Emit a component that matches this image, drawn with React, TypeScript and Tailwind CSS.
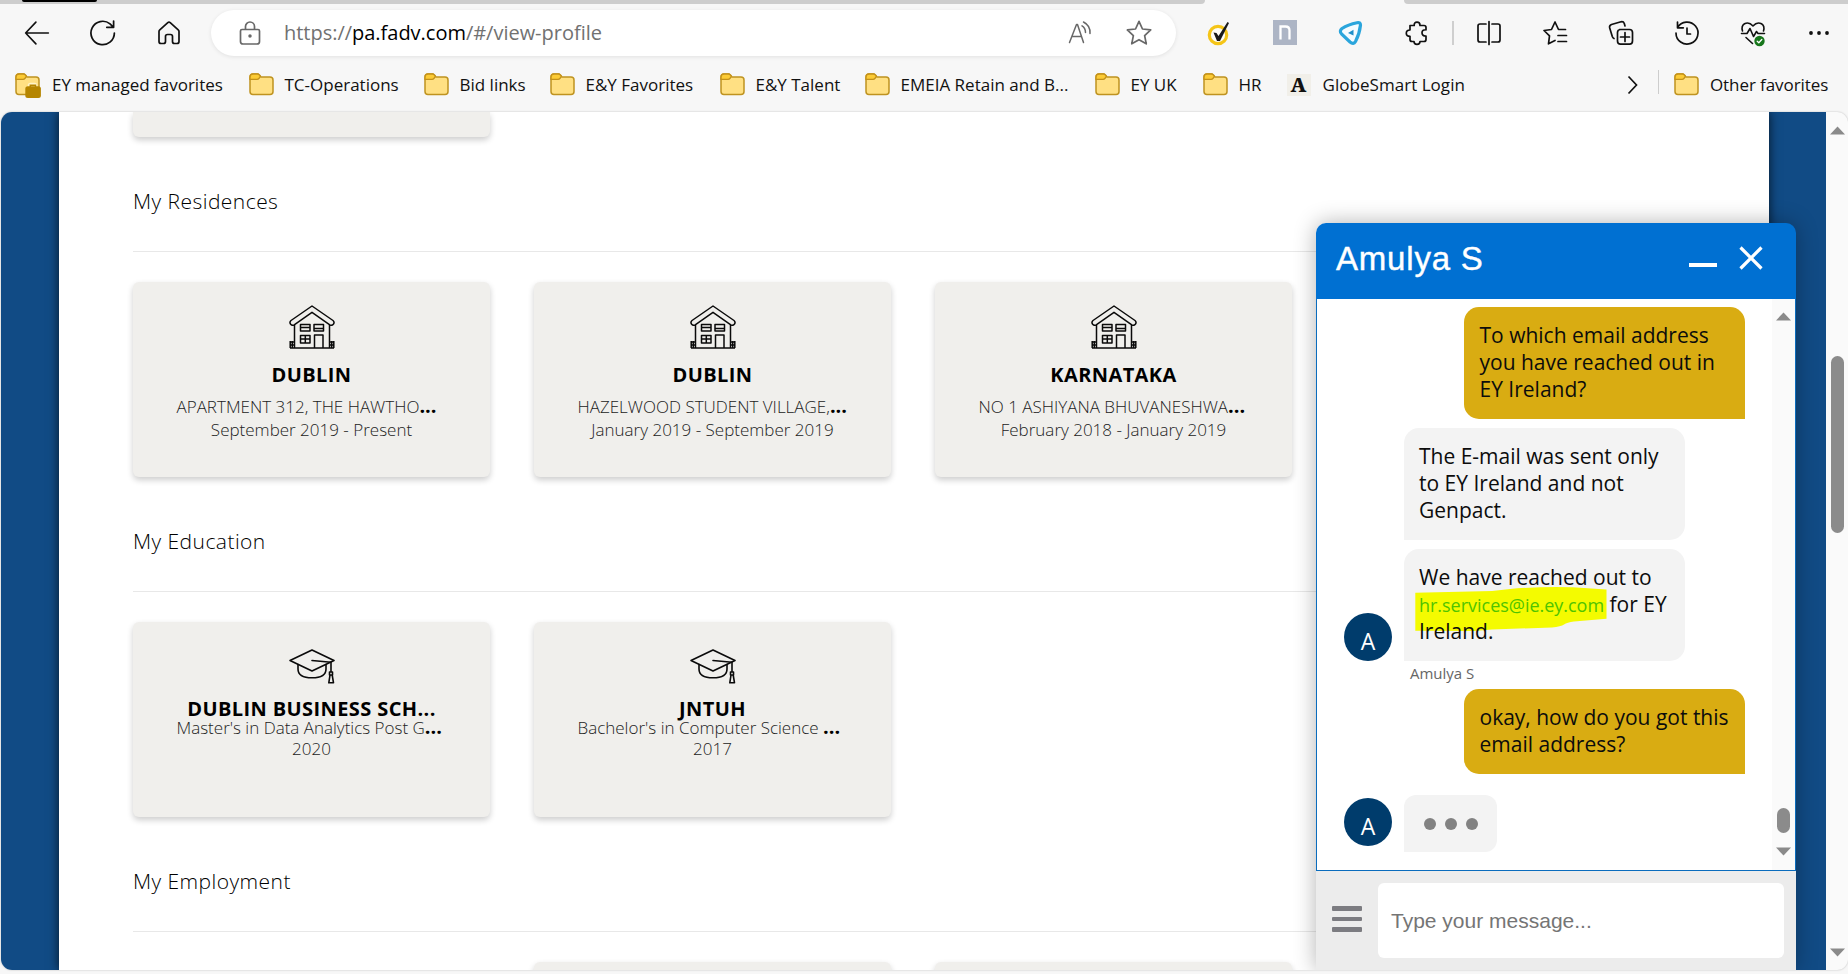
import type { ReactNode } from "react";

const OPEN = "font-['Open_Sans',sans-serif]";

function Cell({ children }: { children: ReactNode }) {
  return <div className="flex w-[66px] shrink-0 items-center justify-center">{children}</div>;
}

function Line({ d, w = 24, children, stroke = "#111", sw = 1.7 }: { d: string; w?: number; children?: ReactNode; stroke?: string; sw?: number }) {
  return (
    <svg width={w} height={w} viewBox="0 0 24 24" fill="none" stroke={stroke} strokeWidth={sw} strokeLinecap="round" strokeLinejoin="round" className="overflow-visible">
      <path d={d} />
      {children}
    </svg>
  );
}

function Folder({ managed = false }: { managed?: boolean }) {
  return (
    <svg width="26" height="24" viewBox="0 0 26 24" className="shrink-0 overflow-visible">
      <path d="M1 4.5Q1 1 4 1H9L12 4H21Q24 4 24 7V18.500Q24 21.500 21 21.500H4Q1 21.500 1 18.500Z" fill="#ffe083" stroke="#bf9320" strokeWidth="1.5" />
      <path d="M1 4Q1 1 4 1H8.500Q9.500 1 10.500 2L11.500 3.200L10 5.400Q9.300 6.400 8 6.400H1Z" fill="#fccb35" stroke="#c4921a" strokeWidth="1.400" strokeLinejoin="round" />
      {managed && (
        <g>
          <path d="M14.500 14V12.500Q14.500 11.500 15.500 11.500H19.500Q20.500 11.500 20.500 12.500V14" fill="none" stroke="#fff3c8" strokeWidth="3.500" />
          <rect x="10.300" y="13.200" width="15.600" height="11.800" rx="2.500" fill="#b58500" />
          <path d="M15.300 14V12.300H20.500V14" fill="none" stroke="#b58500" strokeWidth="1.500" />
        </g>
      )}
    </svg>
  );
}

const bookmarks = [
  { label: "TC-Operations", cell: "w-[175px]" },
  { label: "Bid links", cell: "w-[126px]" },
  { label: "E&Y Favorites", cell: "w-[170px]" },
  { label: "E&Y Talent", cell: "w-[145px]" },
  { label: "EMEIA Retain and B...", cell: "w-[230px]" },
  { label: "EY UK", cell: "w-[108px]" },
  { label: "HR", cell: "w-[84px]" },
];

function Toolbar() {
  return (
    <div className="flex h-[57px] items-center pl-[4px]">
      <Cell><Line w={26} sw={1.5} d="M22.500 12H1.500M11 2L1.500 12L11 22" /></Cell>
      <Cell>
        <Line w={26} sw={1.600} d="M22.500 12A10.800 10.800 0 1 1 18.500 3.600L21.500 6.500M21.800 1V6.800H15.500" />
      </Cell>
      <Cell><Line sw={1.700} d="M2 10.500Q2 9.500 2.800 8.800L10.800 1.700Q12 0.700 13.200 1.700L21.200 8.800Q22 9.500 22 10.500V20.500Q22 22.500 20 22.500H17.500Q15.500 22.500 15.500 20.500V15.500Q15.500 13.500 13.500 13.500H10.500Q8.500 13.500 8.500 15.500V20.500Q8.500 22.500 6.500 22.500H4Q2 22.500 2 20.500Z" /></Cell>

      <div className="ml-[9px] flex h-[46px] w-[965px] shrink-0 items-center rounded-full bg-white pr-[24px] pl-[27px] shadow-[0_1px_4px_rgba(0,0,0,0.09)]">
        <Line stroke="#686868" d="M4 8.500H20Q21.500 8.500 21.500 10V20.500Q21.500 23 19 23H5Q2.500 23 2.500 20.500V10Q2.500 8.500 4 8.500ZM7.500 8V5.500A4.500 4.500 0 0 1 16.500 5.500V8">
          <circle cx="12" cy="15" r="0.900" fill="#686868" />
        </Line>
        <span className="ml-[22px] flex-1 text-[20px] leading-7 tracking-[-0.02px] text-[#717171]">
          https://<span className="text-black">pa.fadv.com</span>/#/view-profile
        </span>
        <Line stroke="#686868" sw={1.500} d="M1.500 21.500L8.500 3.500H9.500L15.500 21.500M4 15.500H13.500M14 4.800Q17.500 7 17.500 11.500M15.500 1Q22.500 4.500 22 12.500" />
        <div className="ml-[34px]">
          <Line w={26} stroke="#686868" sw={1.600} d="M12 1.300L15.200 8.300L22.800 9.200L17.200 14.400L18.700 22L12 18.200L5.300 22L6.800 14.400L1.200 9.200L8.800 8.300Z" />
        </div>
      </div>

      <div className="ml-[10px] flex shrink-0">
        <Cell>
          <svg width="24" height="24" viewBox="0 0 24 24" className="overflow-visible">
            <circle cx="11" cy="14" r="8.700" fill="#fdfdf7" stroke="#f5c518" strokeWidth="3.200" />
            <path d="M6.500 11.500L9.500 12L11.500 15L20.500 1L22 2L13 20H10Z" fill="#1a1a1a" />
          </svg>
        </Cell>
        <Cell>
          <svg width="24" height="25" viewBox="0 0 24 25">
            <rect width="24" height="25" fill="#adb5c5" />
            <path d="M7.500 19.500V6.500H12.500Q16.500 6.500 16.500 10.500V19.500" fill="none" stroke="#fff" strokeWidth="2.300" />
          </svg>
        </Cell>
        <Cell>
          <svg width="24" height="24" viewBox="0 0 24 24" className="overflow-visible">
            <path d="M3 7.500Q0 10 2.500 12.800L11 21Q14.500 24 16.500 20.500Q20.500 13 21.500 4Q21.500 1 18 1.700Q9 3.500 3 7.500Z" fill="#f4fbff" stroke="#2aa5dc" strokeWidth="3.200" />
            <path d="M9 12L14.500 8.700V14.500Z" fill="#1f8fc9" />
          </svg>
        </Cell>
        <Cell>
          <Line d="M5 4.500H9.200Q9 1.200 12 1.200T15 4.500H19Q21 4.500 21 6.500V8.800Q17 8.500 17 11.800T21 15V18.500Q21 20.500 19 20.500H15Q15 23.300 12 23.300T9 20.500H7Q5 20.500 5 18.500V15.300Q1.300 15.300 1.300 12.200T5 9Z" />
        </Cell>
        <div className="flex w-[6px] items-center justify-center"><div className="h-[24px] w-[2px] bg-[#cfcfcf]" /></div>
        <Cell><Line d="M9 3H3Q1 3 1 5V19Q1 21 3 21H9M15 3H21Q23 3 23 5V19Q23 21 21 21H15M12 0.500V23.500" /></Cell>
        <Cell><Line d="M22.500 8.500H15.500L12 1L8.500 8.500L1 9.500L6.500 14.800L5.500 22.800L12 19.500M15 14.500H23.500M15 20.500H23.500" /></Cell>
        <Cell>
          <Line d="M10.500 8.500H20.500Q23.500 8.500 23.500 11.500V20Q23.500 23.200 20.500 23.200H11.500Q8.500 23.200 8.500 20V11.500Q8.500 8.500 11.500 8.500M16 11.500V20.500M11.500 16H20.500M5 17.500Q3.800 17 3.300 15.500L0.700 7Q0 4.500 2.500 3.500L12 0.800Q14.500 0.300 15.300 2.500L16 5" />
        </Cell>
        <Cell><Line d="M2.500 6.500A11 11 0 1 1 1 12M2.500 1V6.800H8.300M12 7V13H15.500" /></Cell>
        <Cell>
          <Line sw={1.600} d="M1.500 10Q0 5 3.500 2.800Q8 0.500 12 5Q16 0.500 20.500 2.800Q24 5 22.500 10M0.500 12.500H6L9 7.500L12.500 15.500L15.500 10.500L17 12.500H23.500M5 16.500L11.500 22.500">
            <circle cx="18.500" cy="20" r="5.200" fill="#17761b" stroke="none" />
            <path d="M16.200 20.200L17.800 21.700L20.800 18.500" stroke="#fff" strokeWidth="1.300" />
          </Line>
        </Cell>
        <Cell>
          <svg width="24" height="24" viewBox="0 0 24 24" fill="#111"><circle cx="4" cy="12" r="1.900" /><circle cx="12" cy="12" r="1.900" /><circle cx="20" cy="12" r="1.900" /></svg>
        </Cell>
      </div>
    </div>
  );
}

function BookmarkBar() {
  return (
    <div className="flex h-[51px] items-center pb-[3px] pl-[15px] text-[17px] whitespace-nowrap text-[#111]">
      <div className="flex w-[233.500px] items-center gap-[11px]"><Folder managed /><span>EY managed favorites</span></div>
      {bookmarks.map((b) => (
        <div key={b.label} className={`flex shrink-0 items-center gap-[10px] ${b.cell}`}><Folder /><span>{b.label}</span></div>
      ))}
      <div className="flex items-center gap-[12px]">
        <span className="flex h-[22px] w-[24px] items-center justify-center bg-[#f1efe9] font-['Noto_Serif','DejaVu_Serif',serif] text-[20px] leading-none font-black">A</span>
        <span className="tracking-[0.04px]">GlobeSmart Login</span>
      </div>
      <svg width="12" height="20" viewBox="0 0 12 20" className="ml-[162px]" fill="none" stroke="#111" strokeWidth="1.700"><path d="M1.500 1.500L9.500 10L1.500 18.500" /></svg>
      <div className="mt-[9px] ml-[19px] h-[24px] w-px self-start bg-[#cdcdcd]" />
      <div className="ml-[15px] flex items-center gap-[10px]"><Folder /><span className="tracking-[-0.08px]">Other favorites</span></div>
    </div>
  );
}

function House() {
  return (
    <svg width="46" height="44" viewBox="0 0 46 44" fill="none" stroke="#0a0a0a" strokeWidth="1.500" strokeLinejoin="round">
      <path d="M23 1L44 15.500Q45.800 17 44.500 19Q43 21 40.800 19.800L23 7.300L5.200 19.800Q3 21 1.500 19Q0.200 17 2 15.500Z" />
      <path d="M5.500 20V43H40.500V20M1 43H45M1 37H5M1 40H5M1.200 36V43M3.300 36V43M41 37H45M41 40H45M44.800 36V43M42.700 36V43" />
      <path d="M11.500 19.500H21V26H11.500ZM11.500 22.500H21M25 19.500H34.500V26H25ZM25 23.500H34.500M11.500 30.500H21V38H11.500ZM11.500 34H21M16.300 30.500V38M25.500 43V30H34V43" />
    </svg>
  );
}

function Cap() {
  return (
    <svg width="46" height="35" viewBox="0 0 46 35" fill="none" stroke="#0a0a0a" strokeWidth="1.600" strokeLinejoin="round" strokeLinecap="round">
      <path d="M23 1L45 11.500L23 22L1 11.500Z" />
      <path d="M9 15.500V20Q9 28.800 23 28.800T37 20V15.500M23 11.500L42 13.300V23M40.500 23H43.500V26H40.500ZM41 26L39.800 33.800H44.500L43.200 26" />
    </svg>
  );
}

type Item = { title: string; detail: string; date: string };

function Card({ kind, item }: { kind: "home" | "school"; item: Item }) {
  const home = kind === "home";
  return (
    <div className="flex h-[195px] w-[357px] shrink-0 flex-col items-center rounded-[6px] bg-[#f0efec] shadow-[0_3px_6px_rgba(0,0,0,0.2)]">
      <div className={home ? "h-[67px] pt-[23px]" : "h-[62px] pt-[27px]"}>{home ? <House /> : <Cap />}</div>
      <div className={`text-[20px] font-bold tracking-[0.4px] text-black ${home ? "mt-[12px] leading-[28px]" : "mt-[12px] leading-[25px]"}`}>{item.title}</div>
      <div className={`flex w-[270px] items-baseline text-[17px] font-light whitespace-pre text-[#222] ${home ? "mt-[6px] h-[23px] leading-[23px]" : "-mt-[4px] h-[20px] leading-[20px]"}`}>
        <span>{item.detail}</span>
        <span className="text-[20px] leading-none font-bold text-black">...</span>
      </div>
      <div className={`text-[17px] font-light text-[#222] ${home ? "leading-[23px]" : "mt-[2px] leading-[20px]"}`}>{item.date}</div>
    </div>
  );
}

function Section({ title, children }: { title: string; children: ReactNode }) {
  return (
    <section className="h-[340px] shrink-0 pt-[50px]">
      <h2 className="h-[28px] text-[21px] leading-[28px] font-light tracking-[0.450px] text-black">{title}</h2>
      <div className="mt-[36px] h-px w-[1560px] bg-[#e8e8e8]" />
      <div className="mt-[30px] flex gap-[44px]">{children}</div>
    </section>
  );
}

const residences: Item[] = [
  { title: "DUBLIN", detail: "APARTMENT 312, THE HAWTHO", date: "September 2019 - Present" },
  { title: "DUBLIN", detail: "HAZELWOOD STUDENT VILLAGE,", date: "January 2019 - September 2019" },
  { title: "KARNATAKA", detail: "NO 1 ASHIYANA BHUVANESHWA", date: "February 2018 - January 2019" },
];

const education: Item[] = [
  { title: "DUBLIN BUSINESS SCH...", detail: "Master's in Data Analytics Post G", date: "2020" },
  { title: "JNTUH", detail: "Bachelor's in Computer Science ", date: "2017" },
];

function Arrow({ down = false }: { down?: boolean }) {
  return (
    <svg width="15" height="9" viewBox="0 0 15 9" fill="#8a8a8a"><path d={down ? "M0 0.500H15L7.500 8.500Z" : "M0 8.500H15L7.500 0.500Z"} /></svg>
  );
}

function Avatar() {
  return <div className="flex size-[48px] shrink-0 items-center justify-center rounded-full bg-[#003c6c] pt-[8px] text-[23px] leading-none text-white">A</div>;
}

function Sent({ children }: { children: ReactNode }) {
  return <div className="ml-[147px] w-[281px] rounded-[15px] rounded-br-none bg-[#d9ac12] px-[15.500px] pt-[15px] pb-[16px] leading-[27px] whitespace-nowrap">{children}</div>;
}

function Received({ children }: { children: ReactNode }) {
  return <div className="relative w-[281px] rounded-[15px] rounded-bl-none bg-[#f3f3f3] px-[15px] pt-[15px] pb-[16px] leading-[27px] whitespace-nowrap">{children}</div>;
}

function Chat() {
  return (
    <div className="absolute top-[111px] right-[52px] flex h-[747px] w-[480px] flex-col rounded-t-[10px] shadow-[0_0_22px_rgba(0,0,0,0.3)]">
      <div className="flex h-[76px] items-center rounded-t-[10px] bg-[#0070d2] pr-[33px] pl-[20px]">
        <span className="flex-1 pb-[4px] font-['Liberation_Sans',sans-serif] text-[33px] leading-9 tracking-[0.8px] text-white [-webkit-text-stroke:0.4px_white]">Amulya S</span>
        <div className="mt-[7px] h-[4px] w-[28px] bg-white" />
        <svg width="24" height="24" viewBox="0 0 24 24" className="mb-[6px] ml-[22px]" fill="none" stroke="#fff" strokeWidth="3.200"><path d="M1.500 1.500L22.500 22.500M22.500 1.500L1.500 22.500" /></svg>
      </div>
      <div className="flex h-[572px] border border-t-0 border-[#0a6cbd] bg-white text-[21px] text-[#0c0c0c]">
        <div className="flex-1 pt-[8px]">
          <Sent>To which email address<br />you have reached out in<br />EY Ireland?</Sent>
          <div className="mt-[9px] ml-[87px]">
            <Received>The E-mail was sent only<br />to EY Ireland and not<br />Genpact.</Received>
          </div>
          <div className="mt-[9px] ml-[27px] flex items-end gap-[12px]">
            <Avatar />
            <Received>
              <svg className="absolute top-0 left-0" width="281" height="112" viewBox="0 0 281 112" fill="#f4fb00">
                <path d="M11.300 43.700L88 42L113 39.300Q140 37.600 168.600 38.300L202.500 40.500V69.700L170 72.500Q163 73.500 160 75.500T148 78.500L88 80.500L70 82L11.300 81.700Z" />
              </svg>
              <div className="relative">
                We have reached out to<br />
                <span className="text-[18px] leading-none tracking-[-0.020px] text-[#4fc400]">hr.services@ie.ey.com</span> for EY<br />
                Ireland.
              </div>
            </Received>
          </div>
          <div className="ml-[93px] h-[28px] text-[15px] leading-[25px] text-[#666]">Amulya S</div>
          <Sent>okay, how do you got this<br />email address?</Sent>
          <div className="mt-[21px] ml-[27px] flex items-center gap-[12px]">
            <div className="-mt-[3px]"><Avatar /></div>
            <div className="flex h-[57px] w-[93px] items-center gap-[9px] rounded-[12px] rounded-bl-none bg-[#f3f3f3] pl-[20px]">
              <div className="size-[12px] rounded-full bg-[#828282]" />
              <div className="size-[12px] rounded-full bg-[#828282]" />
              <div className="size-[12px] rounded-full bg-[#828282]" />
            </div>
          </div>
        </div>
        <div className="flex w-[23px] flex-col items-center bg-[#fafafa] pt-[13px] pb-[14px]">
          <Arrow />
          <div className="flex-1" />
          <div className="mb-[14px] h-[25px] w-[13px] rounded-full bg-[#8b8b8b]" />
          <Arrow down />
        </div>
      </div>
      <div className="flex flex-1 items-start bg-[#ececec] pt-[12px] pl-[16px]">
        <div className="mt-[23px] flex w-[30px] flex-col gap-[6px]">
          <div className="h-[4.500px] rounded-[1px] bg-[#7c7c81]" />
          <div className="h-[4.500px] rounded-[1px] bg-[#7c7c81]" />
          <div className="h-[4.500px] rounded-[1px] bg-[#7c7c81]" />
        </div>
        <div className="ml-[16px] flex h-[75px] w-[406px] items-center rounded-[6px] bg-white pl-[13px] font-['Liberation_Sans',sans-serif] text-[21px] text-[#757575]">Type your message...</div>
      </div>
    </div>
  );
}

export default function App() {
  return (
    <div className={`flex h-[974px] w-[1848px] flex-col overflow-hidden bg-[#f7f7f7] ${OPEN}`}>
      <div className="flex h-[4px] shrink-0 justify-between">
        <div className="w-[1205px] rounded-br-[4px] bg-[#cdcdcd]"><div className="ml-[22px] h-[1.500px] w-[75px] rounded-b bg-black" /></div>
        <div className="w-[444px] rounded-bl-[4px] bg-[#cdcdcd]" />
      </div>
      <Toolbar />
      <BookmarkBar />
      <div className="relative ml-px flex h-[858px] shrink-0 overflow-hidden rounded-l-[11px] rounded-r-[11px] bg-[#fafafa] shadow-[0_0_2px_rgba(0,0,0,0.25)]">
        <div className="flex w-[1825px] overflow-hidden bg-[#114b85] px-[58px]">
          <div className="flex w-[1710px] shrink-0 flex-col bg-white pl-[74px] shadow-[0_0_10px_rgba(0,0,0,0.75)]">
            <div className="h-[25px] w-[357px] shrink-0 rounded-b-[6px] bg-[#f0efec] shadow-[0_3px_6px_rgba(0,0,0,0.2)]" />
            <Section title="My Residences">{residences.map((r, i) => <Card key={i} kind="home" item={r} />)}</Section>
            <Section title="My Education">{education.map((r, i) => <Card key={i} kind="school" item={r} />)}</Section>
            <Section title="My Employment">
              <div className="w-[357px]" />
              <div className="h-[195px] w-[357px] rounded-[6px] bg-[#f0efec] shadow-[0_3px_6px_rgba(0,0,0,0.2)]" />
              <div className="h-[195px] w-[357px] rounded-[6px] bg-[#f0efec] shadow-[0_3px_6px_rgba(0,0,0,0.2)]" />
            </Section>
          </div>
        </div>
        <div className="flex w-[22px] flex-col items-center pt-[14px] pb-[13px]">
          <Arrow />
          <div className="mt-[221px] h-[177px] w-[13px] rounded-full bg-[#8b8b8b]" />
          <div className="flex-1" />
          <Arrow down />
        </div>
        <Chat />
      </div>
    </div>
  );
}
